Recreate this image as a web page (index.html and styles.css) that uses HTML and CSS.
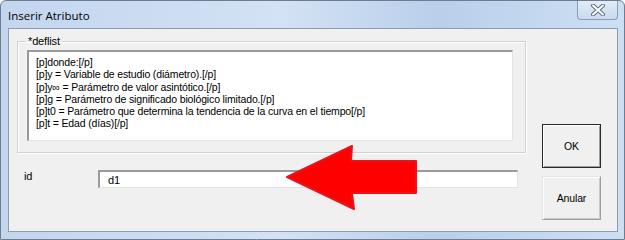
FILE: index.html
```html
<!DOCTYPE html>
<html lang="pt">

<head>
    <meta charset="UTF-8">
    <title>Inserir Atributo</title>
    <link rel="stylesheet" href="styles.css">
</head>

<body>
    <div class="window">
        <div class="titlebar">
            <span class="title">Inserir Atributo</span>
            <div class="close">
                <svg width="16" height="12" viewBox="0 0 16 12">
                    <path d="M3 1.5 L13 10.5 M13 1.5 L3 10.5" stroke="#5b6d84" stroke-width="4" stroke-linecap="round"/>
                    <path d="M3 1.5 L13 10.5 M13 1.5 L3 10.5" stroke="#ffffff" stroke-width="2" stroke-linecap="round"/>
                </svg>
            </div>
        </div>

        <div class="client">
            <div class="main">
                <fieldset class="group">
                    <legend>*deflist</legend>
                    <div class="memo">
                        <div>[p]donde:[/p]</div>
                        <div>[p]y = Variable de estudio (diámetro).[/p]</div>
                        <div>[p]y∞ = Parámetro de valor asintótico.[/p]</div>
                        <div>[p]g = Parámetro de significado biológico limitado.[/p]</div>
                        <div>[p]t0 = Parámetro que determina la tendencia de la curva en el tiempo[/p]</div>
                        <div>[p]t = Edad (días)[/p]</div>
                    </div>
                </fieldset>
                <div class="field">
                    <label>id</label>
                    <div class="textbox">d1</div>
                </div>
            </div>
            <div class="buttons">
                <div class="btn default">OK</div>
                <div class="btn">Anular</div>
            </div>
        </div>

        <!-- seta vermelha por cima do formulário -->
        <svg class="arrow" width="625" height="240" viewBox="0 0 625 240">
            <polygon points="287,177 352,146 351,161 416,161 416,193 352,193 354,209"
                fill="#ff0000" stroke="#e8141c" stroke-width="2" stroke-linejoin="round"/>
        </svg>
    </div>
</body>

</html>
```

FILE: styles.css
```css
* {
    box-sizing: border-box;
}

body {
    margin: 0;
    font-family: "Liberation Sans", Arial, sans-serif;
    font-size: 10.5px;
    letter-spacing: -0.15px;
    color: #000;
    background: #fff;
}

.window {
    position: relative;
    width: 625px;
    height: 240px;
    background: linear-gradient(90deg, #c3d6ee 0%, #d3e2f4 45%, #b9cfea 70%, #cddff3 100%);
    border: 1px solid #6d7c90;
    border-radius: 6px 6px 0 0;
    padding: 0 6px 7px 7px;
    display: flex;
    flex-direction: column;
}

.titlebar {
    height: 27px;
    display: flex;
    align-items: flex-start;
    justify-content: space-between;
}

.title {
    font-family: "Open Sans", sans-serif;
    font-size: 11.5px;
    letter-spacing: 0;
    margin-top: 7px;
    color: #000;
}

.close {
    width: 41px;
    height: 19px;
    border: 1px solid #8b9db5;
    border-top: 0;
    border-radius: 0 0 4px 4px;
    background: linear-gradient(#e3ecf7, #c9d9ee);
    display: flex;
    align-items: center;
    justify-content: center;
}

.client {
    flex: 1;
    background: #f0f0f0;
    border: 1px solid #8d9cb0;
    display: flex;
    padding: 6px 0 0 8px;
}

.main {
    width: 509px;
}

.group {
    margin: 0;
    height: 118px;
    padding: 3px 12px 10px 9px;
    border: 1px solid #d0d0d0;
    box-shadow: 1px 1px 0 #fff, inset 1px 1px 0 #fff;
}

.group legend {
    padding: 0 2px;
    margin-left: -1px;
    line-height: 12px;
    font-size: 11px;
}

.memo {
    height: 91px;
    background: #fff;
    border-top: 2px solid #9a9a9a;
    border-left: 2px solid #9a9a9a;
    border-right: 1px solid #e3e3e3;
    border-bottom: 1px solid #e3e3e3;
    padding: 4px 7px;
    line-height: 12.3px;
}

.field {
    display: flex;
    align-items: flex-start;
    margin-top: 17px;
}

.field label {
    width: 81px;
    padding-left: 7px;
    font-size: 11px;
}

.textbox {
    width: 420px;
    height: 18px;
    background: #fff;
    border-top: 2px solid #9a9a9a;
    border-left: 2px solid #9a9a9a;
    border-right: 1px solid #e3e3e3;
    border-bottom: 1px solid #e3e3e3;
    padding: 2px 8px;
    line-height: 12px;
    font-size: 11px;
}

.buttons {
    margin-left: 16px;
    margin-top: 89px;
    display: flex;
    flex-direction: column;
    gap: 8px;
}

.btn {
    width: 59px;
    height: 44px;
    display: flex;
    justify-content: center;
    align-items: center;
    background: #f0f0f0;
    border: 1px solid;
    border-color: #e3e3e3 #a0a0a0 #a0a0a0 #e3e3e3;
    box-shadow: inset 1px 1px 0 #fff, inset -1px -1px 0 #c8c8c8;
}

.btn.default {
    border: 1px solid #2a2a2a;
    box-shadow: inset 1px 1px 0 #fff, inset -1px -1px 0 #a0a0a0;
}

.arrow {
    position: absolute;
    left: -1px;
    top: -1px;
}
```
